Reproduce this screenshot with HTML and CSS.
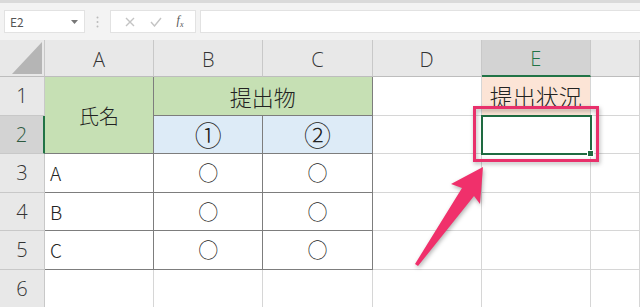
FILE: index.html
```html
<!DOCTYPE html>
<html lang="ja">
    <head>
        <meta charset="UTF-8">
        <meta name="viewport" content="width=device-width, initial-scale=1.0">
        <title>提出状況</title>
        <link rel="stylesheet" href="styles.css">
    </head>
    <body>
        <div class="toolbar">
            <div class="namebox">
                <span>E2</span>
                <svg class="caret" width="7" height="4" viewBox="0 0 7 4"><path d="M0 0h7L3.5 4z" fill="#777"/></svg>
            </div>
            <div class="grip">
                <svg width="3" height="12" viewBox="0 0 3 12"><circle cx="1.5" cy="1.5" r="1" fill="#bbb"/><circle cx="1.5" cy="6" r="1" fill="#bbb"/><circle cx="1.5" cy="10.5" r="1" fill="#bbb"/></svg>
            </div>
            <div class="fxbox">
                <svg width="10" height="10" viewBox="0 0 10 10"><path d="M1 1l8 8M9 1l-8 8" stroke="#c4c4c4" stroke-width="1.4"/></svg>
                <svg width="12" height="10" viewBox="0 0 12 10"><path d="M1 5l3.5 4L11 1" stroke="#c4c4c4" stroke-width="1.4" fill="none"/></svg>
                <span class="fx">f<sub>x</sub></span>
            </div>
            <div class="formula"></div>
        </div>

        <div class="sheet">
            <!-- column headers -->
            <div class="corner"><span class="tri"></span></div>
            <div class="ch">A</div>
            <div class="ch">B</div>
            <div class="ch">C</div>
            <div class="ch">D</div>
            <div class="ch sel">E</div>
            <div class="ch"></div>

            <!-- row 1 -->
            <div class="rh">1</div>
            <div class="c tb green merge-v">氏名</div>
            <div class="c tb green merge-h big">提出物</div>
            <div class="c"></div>
            <div class="c peach big">提出状況</div>
            <div class="c"></div>

            <!-- row 2 -->
            <div class="rh sel">2</div>
            <div class="c tb blue num">①</div>
            <div class="c tb blue num">②</div>
            <div class="c"></div>
            <div class="c active"></div>
            <div class="c"></div>

            <!-- row 3 -->
            <div class="rh">3</div>
            <div class="c tb">A</div>
            <div class="c tb mid">○</div>
            <div class="c tb mid">○</div>
            <div class="c"></div>
            <div class="c"></div>
            <div class="c"></div>

            <!-- row 4 -->
            <div class="rh">4</div>
            <div class="c tb">B</div>
            <div class="c tb mid">○</div>
            <div class="c tb mid">○</div>
            <div class="c"></div>
            <div class="c"></div>
            <div class="c"></div>

            <!-- row 5 -->
            <div class="rh">5</div>
            <div class="c tb">C</div>
            <div class="c tb mid">○</div>
            <div class="c tb mid">○</div>
            <div class="c"></div>
            <div class="c"></div>
            <div class="c"></div>

            <!-- row 6 -->
            <div class="rh">6</div>
            <div class="c"></div>
            <div class="c"></div>
            <div class="c"></div>
            <div class="c"></div>
            <div class="c"></div>
            <div class="c"></div>
        </div>

        <svg class="note" width="640" height="307" viewBox="0 0 640 307">
            <rect x="474.5" y="107.5" width="123" height="53" fill="none" stroke="#e8306b" stroke-width="3"/>
            <polygon points="483,167 480,204 474,196 418,266 415,264 462,188 451,184" fill="#f0306b"/>
        </svg>
    </body>
</html>
```

FILE: styles.css
```css
body {
    margin: 0;
    width: 640px;
    height: 307px;
    overflow: hidden;
    position: relative;
    font-family: "Noto Sans CJK JP", "Noto Sans", sans-serif;
    font-weight: 300;
    color: #222;
    background: #fff;
}

.toolbar {
    height: 40px;
    border-top: 3px solid #dadada;
    background: #f3f3f3;
    display: flex;
    align-items: flex-start;
    padding-top: 7px;
    box-sizing: border-box;
}
.namebox {
    margin-left: 4px;
    width: 81px;
    height: 23px;
    background: #fff;
    border: 1px solid #e2e2e2;
    box-sizing: border-box;
    display: flex;
    align-items: center;
    justify-content: space-between;
    padding: 0 6px 0 5px;
    font-size: 12px;
    font-weight: 400;
    color: #555;
}
.grip {
    width: 25px;
    height: 23px;
    display: flex;
    align-items: center;
    justify-content: center;
}
.fxbox {
    width: 86px;
    height: 23px;
    background: #fff;
    border: 1px solid #e2e2e2;
    box-sizing: border-box;
    display: flex;
    align-items: center;
    justify-content: space-around;
    padding: 0 4px 0 6px;
}
.fx {
    font-family: "Liberation Serif", serif;
    font-style: italic;
    font-size: 12px;
    font-weight: 400;
    color: #555;
}
.fx sub {
    font-size: 8px;
}
.formula {
    margin-left: 4px;
    flex: 1;
    height: 23px;
    background: #fff;
    border: 1px solid #e2e2e2;
    border-right: none;
    box-sizing: border-box;
}

.sheet {
    display: grid;
    grid-template-columns: 45px repeat(5, 109.2px) 1fr;
    grid-template-rows: 37px repeat(6, 38.5px);
}
.sheet > div {
    box-sizing: border-box;
    border-right: 1px solid #d6d6d6;
    border-bottom: 1px solid #d6d6d6;
    display: flex;
    align-items: center;
}

.corner {
    background: #e8e8e8;
    position: relative;
    border-right-color: #c8c8c8 !important;
    border-bottom-color: #bdbdbd !important;
}
.tri {
    position: absolute;
    right: 2px;
    bottom: 2px;
    width: 0;
    height: 0;
    border-left: 30px solid transparent;
    border-bottom: 32px solid #b5b5b5;
}
.ch {
    background: #e8e8e8;
    justify-content: center;
    font-family: "Open Sans", "Noto Sans", sans-serif;
    font-size: 20px;
    color: #333;
    border-right-color: #c8c8c8 !important;
    border-bottom-color: #bdbdbd !important;
    padding-top: 2px;
}
.ch.sel {
    background: #d3d3d3;
    color: #217346;
    border-bottom: 2px solid #217346 !important;
}
.rh {
    background: #e8e8e8;
    justify-content: center;
    font-family: "Open Sans", "Noto Sans", sans-serif;
    font-size: 20px;
    color: #333;
    border-right-color: #c8c8c8 !important;
    border-bottom-color: #c8c8c8 !important;
}
.rh.sel {
    background: #d3d3d3;
    color: #2d5a40;
    border-right: 2px solid #217346 !important;
}

.c {
    font-size: 19px;
    padding-left: 5px;
}
.c.mid,
.c.num,
.c.big,
.merge-v {
    justify-content: center;
    padding-left: 0;
}
.merge-v {
    font-size: 20px;
}
.c.big {
    font-size: 22px;
}
.c.mid {
    font-size: 20px;
}
.c.num {
    font-size: 27px;
    font-weight: 200;
}
.tb {
    border-right-color: #7d7d7d !important;
    border-bottom-color: #7d7d7d !important;
}
.green {
    background: #c6e0b4;
}
.blue {
    background: #ddebf7;
}
.peach {
    background: #fce4d6;
    font-size: 23px !important;
}
.merge-v {
    grid-row: span 2;
}
.merge-h {
    grid-column: span 2;
}
.active {
    position: relative;
}
.active::after {
    content: "";
    position: absolute;
    left: -1px;
    top: -1px;
    right: -2px;
    bottom: -2px;
    border: 2px solid #1f6b41;
}
.active::before {
    content: "";
    position: absolute;
    right: -4px;
    bottom: -4px;
    width: 5px;
    height: 5px;
    background: #1f6b41;
    border: 1px solid #fff;
    z-index: 1;
}

.note {
    position: absolute;
    left: 0;
    top: 0;
    pointer-events: none;
    filter: drop-shadow(1px 2px 2px rgba(0, 0, 0, 0.3));
}
```
